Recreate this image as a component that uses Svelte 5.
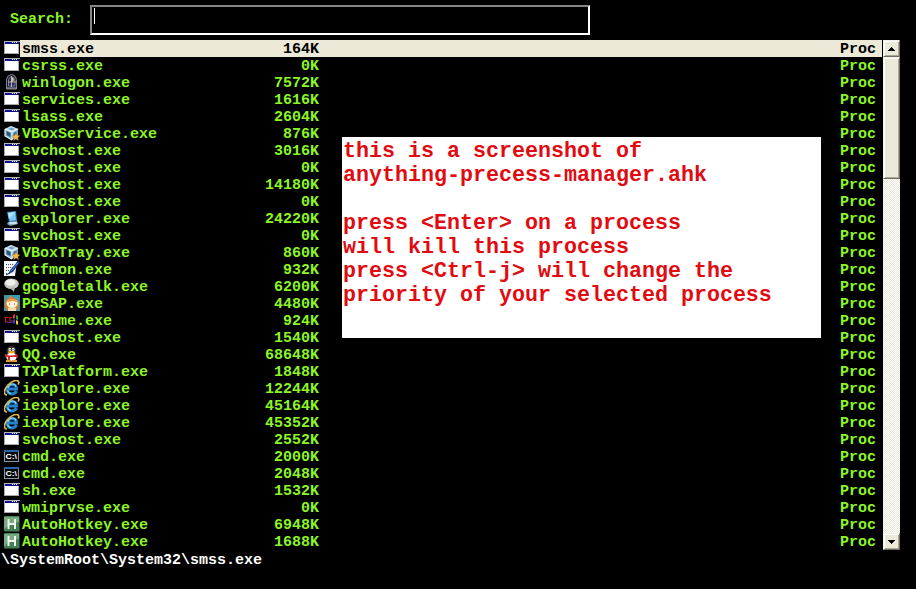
<script>
  const processes = [
    ['smss.exe', 164, 'window'],
    ['csrss.exe', 0, 'window'],
    ['winlogon.exe', 7572, 'logon'],
    ['services.exe', 1616, 'window'],
    ['lsass.exe', 2604, 'window'],
    ['VBoxService.exe', 876, 'vbox'],
    ['svchost.exe', 3016, 'window'],
    ['svchost.exe', 0, 'window'],
    ['svchost.exe', 14180, 'window'],
    ['svchost.exe', 0, 'window'],
    ['explorer.exe', 24220, 'explorer'],
    ['svchost.exe', 0, 'window'],
    ['VBoxTray.exe', 860, 'vbox'],
    ['ctfmon.exe', 932, 'ctfmon'],
    ['googletalk.exe', 6200, 'talk'],
    ['PPSAP.exe', 4480, 'pps'],
    ['conime.exe', 924, 'conime'],
    ['svchost.exe', 1540, 'window'],
    ['QQ.exe', 68648, 'qq'],
    ['TXPlatform.exe', 1848, 'window'],
    ['iexplore.exe', 12244, 'ie'],
    ['iexplore.exe', 45164, 'ie'],
    ['iexplore.exe', 45352, 'ie'],
    ['svchost.exe', 2552, 'window'],
    ['cmd.exe', 2000, 'cmd'],
    ['cmd.exe', 2048, 'cmd'],
    ['sh.exe', 1532, 'window'],
    ['wmiprvse.exe', 0, 'window'],
    ['AutoHotkey.exe', 6948, 'ahk'],
    ['AutoHotkey.exe', 1688, 'ahk'],
  ];
  const note = `this is a screenshot of
anything-precess-manager.ahk

press <Enter> on a process
will kill this process
press <Ctrl-j> will change the
priority of your selected process`;
  let selected = $state(0);
</script>

{#snippet icon(kind)}
  <svg class="icon" width="16" height="17" viewBox="0 0 16 17" aria-hidden="true">
    {#if kind === 'window'}
      <g shape-rendering="crispEdges">
        <rect x="0" y="1" width="16" height="1" fill="#b4b4b4" />
        <rect x="0" y="2" width="15" height="12" fill="#a9a9b4" />
        <rect x="1" y="2" width="14" height="2" fill="#10108c" />
        <path d="M8 2h1v1H8zM10 2h1v1h-1zM12 2h1v1h-1z" fill="#fff" />
        <rect x="1" y="4" width="13" height="9" fill="#fff" />
      </g>
    {:else if kind === 'logon'}
      <path d="M2.500 15V5.500Q3 1 7.500.500q4.500.500 5 5V15z" fill="#15154e" stroke="#85857a" />
      <path d="M4.500 12V6Q5 3 7.500 2.500q3 .5 3.500 3.500v6z" fill="#252585" stroke="#aaa990" stroke-width=".7" />
      <path d="M7.500 2v11M4 8h8" stroke="#bbb78a" />
      <path d="M7.500 3q3 1 2 4l-2 1z" fill="#e7dc72" />
      <path d="M3 14h10" stroke="#aaa" />
    {:else if kind === 'vbox'}
      <path d="M1 4 7 1l7 3v7l-6 4-7-4z" fill="#80adcf" />
      <path d="m1 4 6-3 7 3-6 3z" fill="#c9e0ee" />
      <path d="m4 4 3-1.500L11 4 8 5.500z" fill="#70a2c6" />
      <path d="m2.500 6 4 2v4l-4-2z" fill="#285778" />
      <path d="m9.500 8 3-1.500V10l-3 2z" fill="#3e7299" />
      <path d="m1 4 7 3 6-3M8 7v8M1 4v7l7 4" fill="none" stroke="#e6f2f8" stroke-width="1.200" />
      <path d="m12 8 1.200 2.400 2.700.4-2 1.900.5 2.700-2.400-1.300-2.400 1.300.5-2.700-2-1.900 2.700-.4z" fill="#f6bd46" stroke="#a56b20" stroke-width=".4" />
    {:else if kind === 'explorer'}
      <path d="m3 2 9-1 1 10-8 1z" fill="#318bd0" />
      <path d="m4 3 7-1 1 8-6 1z" fill="#79c7f2" />
      <path d="m4 3 7-1-6 7z" fill="#b5e4fa" />
      <path d="m4 12 9-1 1 3-8 2-3-2z" fill="#839eb8" />
      <ellipse cx="9" cy="13" rx="4" ry="1.200" fill="#cfdfec" />
    {:else if kind === 'ctfmon'}
      <path d="M0 0h13l-2 15H0z" fill="#f5f6fa" />
      <path d="M2 3.500h8M2 6.500h6M2 9.500h4M2 12.500h2" stroke="#4b5368" stroke-dasharray="1 1" />
      <path d="m4 13 3-5 7-8 2 1-7 10z" fill="#17398c" />
      <path d="m7 10 7-8" stroke="#6f91da" />
      <path d="m2 14 4-2" stroke="#102348" fill="none" />
    {:else if kind === 'talk'}
      <ellipse cx="7.500" cy="5.700" rx="7.300" ry="5.300" fill="#c6c6c3" />
      <path d="m6 10 5-1-1 5z" fill="#b0b0ad" />
      <ellipse cx="6.500" cy="4.500" rx="5.200" ry="3.200" fill="#efefec" />
    {:else if kind === 'pps'}
      <rect width="16" height="16" fill="#3b9bab" />
      <path d="M1 12Q0 5 5 3l1-3 3 3q6 1 6 7l-2 5H3z" fill="#e9782d" />
      <ellipse cx="8" cy="8.500" rx="5.500" ry="4.500" fill="#fff3da" />
      <path d="M3 6q3-4 9-1l1 2-4-1-5 1z" fill="#f39a43" />
      <path d="M5 9h1M10 9h1" stroke="#684126" />
      <path d="m4 13 4-1 4 1v3H4z" fill="#f8dba8" />
    {:else if kind === 'conime'}
      <path d="M0 5.500h4M1.500 6v4H4M6 5v5M6 5.500h2M8 8v3" fill="none" stroke="#c41920" stroke-width="1.200" />
      <path d="m9 3 2-1v4l-2 1z" fill="#ed3030" />
      <path d="m12 3 2 1v4l-2-1z" fill="#24a733" />
      <path d="m9 8 2-1v4l-2 1z" fill="#293ddc" />
      <path d="m12 8 2 1v4l-2-1z" fill="#ecce25" />
      <path d="M3 10.500h4" stroke="#2638b9" />
    {:else if kind === 'qq'}
      <path d="M1 12q0-4 4-5h5q4 1 4 5l-2 1H3z" fill="#302b2c" />
      <ellipse cx="7.500" cy="5" rx="5" ry="5" fill="#2c292c" />
      <ellipse cx="7.500" cy="11" rx="5" ry="4.500" fill="#fff" />
      <ellipse cx="5.800" cy="3.500" rx="1.400" ry="1.700" fill="#fff" />
      <ellipse cx="9.200" cy="3.500" rx="1.400" ry="1.700" fill="#fff" />
      <path d="M6 3v1M9 3v1" stroke="#111" />
      <ellipse cx="7.500" cy="6.200" rx="3.500" ry="1.100" fill="#f5a51f" />
      <path d="M1 8q6 3 12 0l1 3-8 0v3H4v-3l-3 0z" fill="#d62723" />
      <path d="M2 14h5v2H2zM8 14h5v2H8z" fill="#e99929" />
    {:else if kind === 'ie'}
      <path d="M12.500 11q-1.500 3-5 3Q3 13.500 3.500 9 4 4.500 8.500 4.500q4 .2 4 4.500H5" fill="none" stroke="#2782ce" stroke-width="3" />
      <path d="M3.800 8Q5 4 8.500 4q2.500 0 3.500 2.500M3.500 10.500q.5 2.500 3.500 3" fill="none" stroke="#8fd9fa" stroke-width="1.200" />
      <path d="M3 15C-1 15 0 9 4 5c4-4 9-6 10.500-3.500.8 1 .3 2-.5 3" fill="none" stroke="#ddb94d" stroke-width="1.700" />
    {:else if kind === 'cmd'}
      <rect x="0" y="2" width="15" height="12" fill="#8298ab" />
      <rect x="0" y="2" width="15" height="2" fill="#2763aa" />
      <rect x="1" y="4" width="13" height="9" fill="#07090c" />
      <text x="1.500" y="11" textLength="11.500" lengthAdjust="spacingAndGlyphs">C:\</text>
    {:else}
      <rect width="15.500" height="15.500" rx="1" fill="#438154" />
      <path d="M0 1h15v5Q6 6 1 13H0z" fill="#78aa80" />
      <path d="M4.500 3v10M11 3v10M4 8h7.500" fill="none" stroke="#f2f6ef" stroke-width="2" />
    {/if}
  </svg>
{/snippet}

<main>
  <header>
    <label for="query">Search:</label>
    <div class="field"><i></i><input id="query" autocomplete="off" /></div>
  </header>

  <section class="listing">
    <div class="rows">
      {#each processes as [name, memory, kind], i}
        <div class="row">
          {@render icon(kind)}
          <button class:active={selected === i} onclick={() => (selected = i)}>
            <span class="name">{name}</span>
            <span class="memory">{memory}K</span>
            <span class="detail">Proc</span>
          </button>
        </div>
      {/each}
    </div>
    <div class="scrollbar">
      <div class="arrow"><svg width="7" height="4" viewBox="0 0 7 4" shape-rendering="crispEdges"><path d="M3 0h1v1h1v1h1v1h1v1H0V3h1V2h1V1h1z" /></svg></div>
      <div class="thumb"></div>
      <div class="track"></div>
      <div class="arrow"><svg width="7" height="4" viewBox="0 0 7 4" shape-rendering="crispEdges"><path d="M0 0h7v1H6v1H5v1H4v1H3V3H2V2H1V1H0z" /></svg></div>
    </div>
    <div class="note">{note}</div>
  </section>
  <footer>\SystemRoot\System32\smss.exe</footer>
</main>

<style>
  :global(body) { background: #000; overflow: hidden; }
  main {
    width: 916px;
    height: 589px;
    box-sizing: border-box;
    background: #000;
    color: #8cf526;
    font: bold 15px/17px "Liberation Mono", "Courier New", monospace;
  }
  header { display: flex; height: 40px; box-sizing: border-box; padding: 5px 0 0 10px; }
  label { width: 80px; padding-top: 6px; font-weight: bold; }
  .field {
    display: flex;
    width: 500px;
    height: 30px;
    box-sizing: border-box;
    padding: 1px 2px;
    border: 2px solid #fff;
    border-top-color: #858585;
    border-left-color: #858585;
  }
  .field i { width: 1px; height: 16px; background: #fff; }
  input { flex: 1; min-width: 0; padding: 0; border: 0; outline: 0; background: transparent; color: inherit; font: inherit; }
  .listing { position: relative; display: flex; height: 510px; padding-left: 4px; }
  .rows { width: 878px; margin-right: 1px; }
  .row { display: flex; height: 17px; }
  .icon { display: block; flex: none; }
  .icon text { fill: #fff; font: bold 7.500px "Liberation Sans", sans-serif; }
  button {
    display: flex;
    flex: 1;
    height: 17px;
    padding: 1px 6px 0 2px;
    border: 0;
    background: transparent;
    color: inherit;
    font: inherit;
    line-height: 18px;
    text-align: left;
  }
  .active { background: #ece9d8; color: #000; }
  .name { width: 197px; }
  .memory { width: 100px; text-align: right; }
  .detail { margin-left: auto; }
  .scrollbar { display: flex; flex-direction: column; width: 17px; height: 510px; }
  .arrow, .thumb {
    box-sizing: border-box;
    background: #ece9d8;
    border: 1px solid #f3f1e7;
    border-right-color: #716f64;
    border-bottom-color: #716f64;
    box-shadow: inset 1px 1px #fff, inset -1px -1px #aca899;
  }
  .arrow { display: flex; align-items: center; justify-content: center; height: 17px; }
  .arrow svg { display: block; }
  .thumb { height: 122px; }
  .track { flex: 1; background: repeating-conic-gradient(#ece9d8 0 25%, #fff 0 50%) 0 0 / 2px 2px; }
  .note {
    position: absolute;
    left: 342px;
    top: 97px;
    width: 479px;
    height: 201px;
    box-sizing: border-box;
    padding: 3px 0 0 1px;
    background: #fff;
    color: #e10b11;
    font-size: 21.670px;
    line-height: 24px;
    white-space: pre;
  }
  footer { padding: 2px 0 0 1px; color: #fff; }
</style>
